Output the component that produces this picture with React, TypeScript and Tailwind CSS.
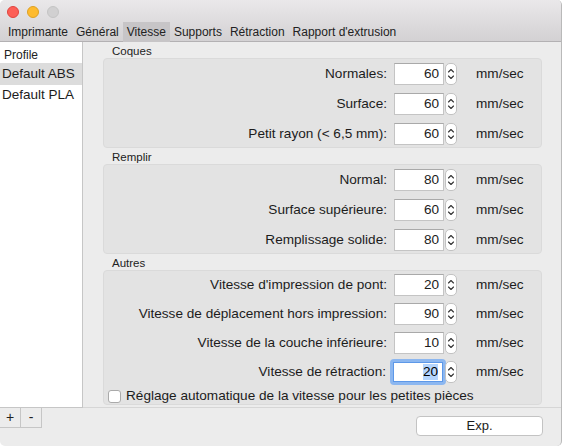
import React from 'react';

type Field = { label: string; value: string; focused?: boolean };

const groups: { title: string; fields: Field[] }[] = [
  {
    title: 'Coques',
    fields: [
      { label: 'Normales:', value: '60' },
      { label: 'Surface:', value: '60' },
      { label: 'Petit rayon (< 6,5 mm):', value: '60' },
    ],
  },
  {
    title: 'Remplir',
    fields: [
      { label: 'Normal:', value: '80' },
      { label: 'Surface supérieure:', value: '60' },
      { label: 'Remplissage solide:', value: '80' },
    ],
  },
  {
    title: 'Autres',
    fields: [
      { label: "Vitesse d'impression de pont:", value: '20' },
      { label: 'Vitesse de déplacement hors impression:', value: '90' },
      { label: 'Vitesse de la couche inférieure:', value: '10' },
      { label: 'Vitesse de rétraction:', value: '20', focused: true },
    ],
  },
];

const tabs = ['Imprimante', 'Général', 'Vitesse', 'Supports', 'Rétraction', "Rapport d'extrusion"];

function Stepper() {
  return (
    <div className="ml-[1px] flex h-[22px] w-[12px] items-center justify-center rounded-[5px] border border-[#c2c2c2] bg-white">
      <svg width="8" height="16" viewBox="0 0 8 16" fill="none" stroke="#333" strokeWidth="1.1" strokeLinecap="round" strokeLinejoin="round">
        <path d="M1.5 6 L4 3.5 L6.5 6" />
        <path d="M1.5 10 L4 12.5 L6.5 10" />
      </svg>
    </div>
  );
}

function Row({ field }: { field: Field }) {
  return (
    <div className="flex h-[22px] items-center">
      <div className="flex-1 text-right text-[13.6px] text-[#1c1c1c]">{field.label}</div>
      {field.focused ? (
        <div className="ml-[4px] rounded-[4px] bg-[#8cb7f0] p-[3px]">
          <div className="flex h-[20px] w-[50px] items-center justify-end border border-[#5d98e8] bg-white pr-[4px] text-[13.6px]">
            <span className="bg-[#b4d5fe] leading-[16px]">{field.value}</span>
          </div>
        </div>
      ) : (
        <div className="ml-[7px] flex h-[22px] w-[50px] items-center justify-end border border-[#c4c4c4] border-t-[#a9a9a9] bg-white pr-[4px] text-[13.6px] text-[#1c1c1c]">
          {field.value}
        </div>
      )}
      {field.focused ? <div className="-ml-[2px]"><Stepper /></div> : <Stepper />}
      <div className="ml-[19px] w-[65px] text-[13.6px] text-[#1c1c1c]">mm/sec</div>
    </div>
  );
}

export default function App() {
  return (
    <div className="h-[446px] w-[567px] bg-white" style={{ fontFamily: '"Liberation Sans", Arial, sans-serif' }}>
      <div className="flex h-[446px] w-[562px] flex-col overflow-hidden rounded-[5px] border-r border-[#b9b9b9] bg-[#ececec]">
        {/* title bar + tabs */}
        <div className="h-[42px] border-b border-[#b3b1b3] bg-gradient-to-b from-[#eae8ea] to-[#d3d1d3]">
          <div className="flex gap-[8px] pl-[7px] pt-[6px]">
            <div className="h-[12px] w-[12px] rounded-full border border-[#e0443e] bg-[#fd5f57]" />
            <div className="h-[12px] w-[12px] rounded-full border border-[#dea123] bg-[#febb2e]" />
            <div className="h-[12px] w-[12px] rounded-full border border-[#c4c4c4] bg-[#d1d0d1]" />
          </div>
          <div className="mt-[4px] flex h-[20px] pl-[4px]">
            {tabs.map((t) => (
              <div
                key={t}
                className={
                  'flex items-center px-[4px] pb-[1px] text-[12px] text-[#222] ' + (t === 'Vitesse' ? 'bg-[#c7c5c7]' : '')
                }
              >
                {t}
              </div>
            ))}
          </div>
        </div>

        <div className="flex flex-1">
          {/* profile list */}
          <div className="flex w-[83px] flex-col">
            <div className="h-[366px] border-r border-b border-[#c6c6c6] bg-white">
              <div className="h-[21px] pl-[4px] pt-[4px] text-[12px] text-[#222]">Profile</div>
              <div className="flex h-[22px] items-center bg-[#dcdcdc] pl-[2px] text-[13.5px] text-[#1c1c1c]">Default ABS</div>
              <div className="flex h-[20px] items-center pl-[2px] text-[13.5px] text-[#1c1c1c]">Default PLA</div>
            </div>
            <div className="flex">
              <div className="flex h-[20px] w-[21px] items-center justify-center border-r border-b border-[#c6c6c6] text-[14px] text-[#222]">+</div>
              <div className="flex h-[20px] w-[21px] items-center justify-center border-r border-b border-[#c6c6c6] text-[14px] text-[#222]">-</div>
            </div>
          </div>

          {/* settings */}
          <div className="flex flex-1 flex-col">
            <div className="pl-[20px] pr-[19px] pt-[2px]">
              {groups.map((g, gi) => (
                <div key={g.title} className={gi > 0 ? 'mt-[2px]' : ''}>
                  <div className="h-[14px] pl-[9px] text-[11.5px] leading-[14px] text-[#222]">{g.title}</div>
                  <div
                    className={
                      'flex flex-col rounded-[4px] border border-[#dadada] bg-[#e3e3e3] ' +
                      (g.title === 'Autres' ? 'gap-[7px] pb-[1px] pt-[3px]' : 'gap-[8px] pb-[2px] pt-[4px]')
                    }
                  >
                    {g.fields.map((f) => (
                      <Row key={f.label} field={f} />
                    ))}
                    {g.title === 'Autres' && (
                      <div className="-mt-[1px] flex h-[14px] items-center pl-[4px]">
                        <div className="h-[13px] w-[13px] rounded-[3px] border border-[#aaa] bg-white" />
                        <span className="ml-[5px] text-[13.6px] text-[#1c1c1c]">
                          Réglage automatique de la vitesse pour les petites pièces
                        </span>
                      </div>
                    )}
                  </div>
                </div>
              ))}
            </div>
            <div className="mt-[2px] border-t border-[#d6d6d6]" />
            <div className="flex justify-end pr-[18px] pt-[8px]">
              <div className="flex h-[20px] w-[127px] items-center justify-center rounded-[4px] border border-[#c3c3c3] bg-white text-[13px] text-[#1c1c1c]">
                Exp.
              </div>
            </div>
          </div>
        </div>
      </div>
    </div>
  );
}
